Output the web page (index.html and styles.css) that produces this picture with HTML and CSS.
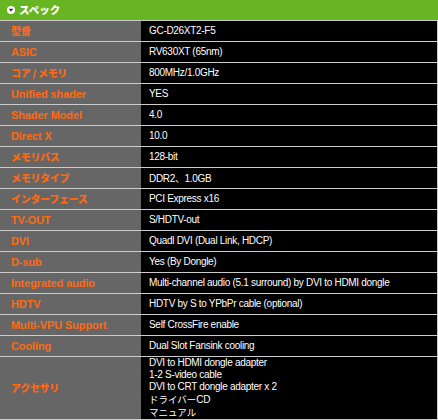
FILE: index.html
```html
<!DOCTYPE html>
<html lang="ja">
<head>
<meta charset="utf-8">
<link rel="stylesheet" href="styles.css">
</head>
<body>
<div class="spec">
  <div class="spec-head">
    <svg class="spec-icon" width="8" height="8" viewBox="0 0 8 8"><circle cx="4" cy="4" r="4" fill="#fff"/><path d="M1.8 2.8 H6.2 L4 5.8 Z" fill="#333"/></svg>
    <span class="spec-title">スペック</span>
  </div>
  <table class="spec-table">
    <tr><th><span class="ja">型番</span></th><td>GC-D26XT2-F5</td></tr>
    <tr><th>ASIC</th><td>RV630XT (65nm)</td></tr>
    <tr><th><span class="ja">コア / メモリ</span></th><td>800MHz/1.0GHz</td></tr>
    <tr><th>Unified shader</th><td>YES</td></tr>
    <tr><th>Shader Model</th><td>4.0</td></tr>
    <tr><th>Direct X</th><td>10.0</td></tr>
    <tr><th><span class="ja">メモリバス</span></th><td>128-bit</td></tr>
    <tr><th><span class="ja">メモリタイプ</span></th><td>DDR2<span class="ja">、</span>1.0GB</td></tr>
    <tr><th><span class="ja">インターフェース</span></th><td>PCI Express x16</td></tr>
    <tr><th>TV-OUT</th><td>S/HDTV-out</td></tr>
    <tr><th>DVI</th><td>Quadl DVI (Dual Link, HDCP)</td></tr>
    <tr><th>D-sub</th><td>Yes (By Dongle)</td></tr>
    <tr><th>Integrated audio</th><td>Multi-channel audio (5.1 surround) by DVI to HDMI dongle</td></tr>
    <tr><th>HDTV</th><td>HDTV by S to YPbPr cable (optional)</td></tr>
    <tr><th>Multi-VPU Support</th><td>Self CrossFire enable</td></tr>
    <tr><th>Cooling</th><td>Dual Slot Fansink cooling</td></tr>
    <tr class="multi"><th><span class="ja">アクセサリ</span></th><td>DVI to HDMI dongle adapter<br>1-2 S-video cable<br>DVI to CRT dongle adapter x 2<br><span class="ja">ドライバー</span>CD<br><span class="ja">マニュアル</span></td></tr>
  </table>
</div>
</body>
</html>
```
FILE: styles.css
```css
html, body {
  margin: 0;
  padding: 0;
  background: #fff;
}
body {
  font-family: "Liberation Sans", "Noto Sans CJK JP", sans-serif;
  font-size: 12px;
}
.ja {
  font-family: "Noto Sans CJK JP", sans-serif;
  font-size: 9.5px;
  letter-spacing: 0;
}
.spec {
  width: 438px;
}
.spec-head {
  height: 20px;
  background: #68b524;
  display: flex;
  align-items: center;
  padding-left: 7px;
  box-sizing: border-box;
}
.spec-icon {
  display: block;
  margin-right: 4px;
}
.spec-title {
  font-family: "Noto Sans CJK JP", sans-serif;
  color: #fff;
  font-weight: 900;
  font-size: 10.5px;
  line-height: 20px;
}
.spec-table {
  width: 438px;
  border-collapse: collapse;
  border-spacing: 0;
  table-layout: fixed;
}
.spec-table th,
.spec-table td {
  border-top: 1px solid #cccccc;
  border-bottom: 1px solid #cccccc;
  height: 20px;
  padding: 0;
  vertical-align: middle;
  text-align: left;
  line-height: 12px;
  white-space: nowrap;
}
.spec-table th {
  width: 130px;
  background: #666666;
  color: #ff6a10;
  font-weight: bold;
  font-size: 11px;
  letter-spacing: -0.1px;
  padding-left: 11px;
}
.spec-table th .ja {
  font-size: 10px;
  font-weight: 900;
  letter-spacing: -0.3px;
}
.spec-table td {
  background: #000;
  color: #fff;
  font-size: 10px;
  letter-spacing: -0.3px;
  padding-left: 8px;
  border-right: 1px solid #cccccc;
}
.spec-table .multi th,
.spec-table .multi td {
  height: 60px;
}
```
